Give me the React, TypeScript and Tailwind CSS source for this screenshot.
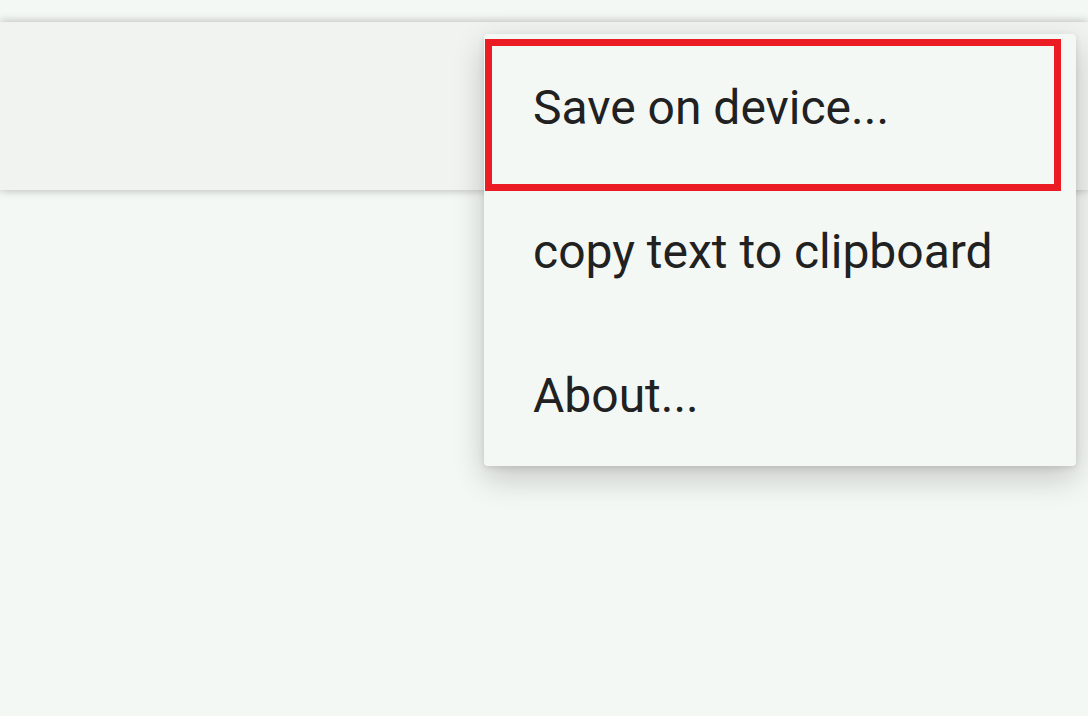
import React from "react";

export default function App() {
  const items = ["Save on device...", "copy text to clipboard", "About..."];
  return (
    <div
      className="relative h-[716px] w-[1088px] overflow-hidden bg-[#f4f8f5]"
      style={{ fontFamily: "Roboto, 'Noto Sans', sans-serif" }}
    >
      <div className="pt-[22px]">
        <div className="h-[168px] w-full bg-[#f1f3f0] shadow-[0_0_9px_rgba(0,0,0,0.28)]" />
      </div>

      <div className="absolute left-[484px] top-[34px] w-[592px] rounded-[4px] bg-[#f4f8f5] shadow-[0_12px_32px_rgba(0,0,0,0.2),0_2px_6px_rgba(0,0,0,0.1)]">
        {items.map((t) => (
          <div
            key={t}
            className="flex h-[144px] items-center pl-[49px] pt-[3px] text-[48px] leading-none text-[#212121]"
          >
            {t}
          </div>
        ))}
      </div>

      <div className="absolute left-[485px] top-[39px] h-[152px] w-[576px] border-[7px] border-[#ec1c24]" />
    </div>
  );
}
